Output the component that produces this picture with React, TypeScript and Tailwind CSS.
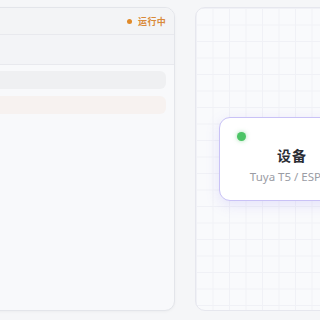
import React from "react"

const gridBg =
  "bg-[linear-gradient(to_right,#f0f1f6_1px,transparent_1px),linear-gradient(to_bottom,#f0f1f6_1px,transparent_1px)] bg-[size:16.5px_16.5px]"

const App = () => {
  return (
    <div
      className="w-[320px] h-[320px] overflow-hidden bg-[#f5f6f8] flex gap-[20px] pt-[7px]"
      style={{ fontFamily: '"Noto Sans", "Noto Sans CJK SC", sans-serif' }}
    >
      {/* left: log panel */}
      <div className="shrink-0 ml-[-200px] w-[375px] h-[304px] rounded-[10px] border border-[#e3e5ea] bg-[#f8f9fb] overflow-hidden flex flex-col shadow-[0_1px_3px_rgba(0,0,0,0.04)]">
        <div className="h-[27px] shrink-0 bg-[#f3f4f6] border-b border-[#e8e9ee] flex items-center justify-end pr-[8px] gap-[6px]">
          <span className="w-[5px] h-[5px] rounded-full bg-[#e08a2a]" />
          <span className="text-[9px] font-semibold text-[#d98a3a] leading-none tracking-[0.3px]">运行中</span>
        </div>
        <div className="h-[30px] shrink-0 bg-[#f3f4f7] border-b border-[#e8e9ee]" />
        <div className="flex flex-col gap-[7px] pt-[6px] pr-[8px]">
          <div className="h-[18px] rounded-[6px] bg-[#eff0f2]" />
          <div className="h-[18px] rounded-[6px] bg-[#f7f2f0]" />
        </div>
      </div>

      {/* right: canvas */}
      <div className={`shrink-0 w-[200px] h-[304px] rounded-[10px] border border-[#e6e7ee] bg-[#f9fafc] ${gridBg} pt-[109px] pl-[23px]`}>
        <div className="w-[146px] h-[84px] rounded-[11px] border border-[#c9c2f6] bg-white shadow-[0_4px_14px_rgba(139,124,246,0.18)] relative flex flex-col items-center pt-[28px]">
          <span className="absolute left-[17px] top-[14px] w-[9px] h-[9px] rounded-full bg-[#4cc466] shadow-[0_0_4px_rgba(76,196,102,0.5)]" />
          <div className="text-[14px] font-bold text-[#2b2d33] leading-[20px] tracking-[1px]">设备</div>
          <div className="text-[11.5px] text-[#9a9ca4] leading-[16px] mt-[3px] whitespace-nowrap">Tuya T5 / ESP32</div>
        </div>
      </div>
    </div>
  )
}

export default App
